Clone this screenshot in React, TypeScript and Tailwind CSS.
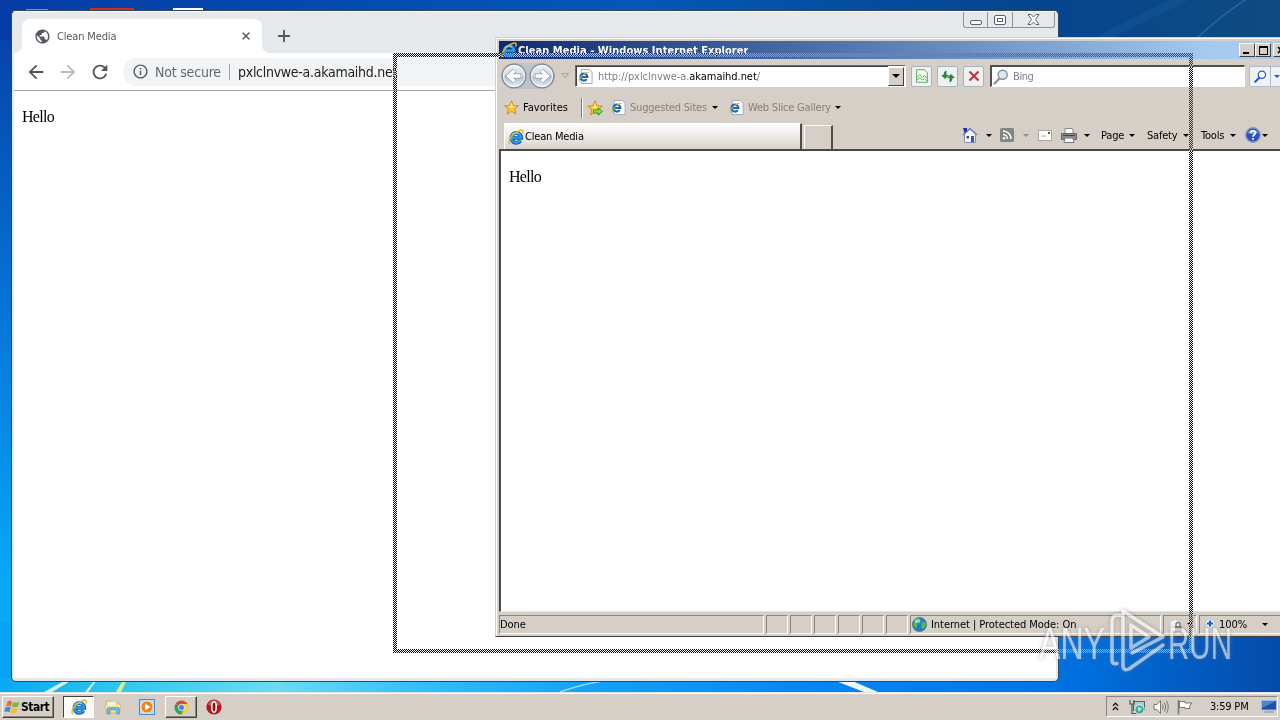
import type { ReactNode } from 'react'
import { Plus, X } from 'lucide-react'
import { MdArrowBack, MdArrowForward, MdInfoOutline, MdPublic, MdRefresh } from 'react-icons/md'

type IconProps = { className?: string }

const STATUS_CELLS = ['c1', 'c2', 'c3', 'c4', 'c5', 'c6']

function IeLogo({ className }: IconProps) {
  return (
    <svg viewBox="0 0 16 16" className={className} fill="none">
      <path d="M3.600 8.800H13.200A4.900 4.900 0 1 0 12.400 11.600" stroke="#1258a8" strokeWidth="3.800" />
      <path d="M3.600 8.600H13A4.900 4.900 0 1 0 12.300 11.300" stroke="#2f9de6" strokeWidth="2.200" />
      <path d="M4 6.200A4.900 4.900 0 0 1 11 5" stroke="#8fd8fa" strokeWidth="1.200" />
      <path d="M2.600 14.600C.2 15 .4 11.800 3 8.200 6 4 12.600-.2 14.700 1.400 15.500 2.100 15.200 3.400 14.500 4.700" stroke="#e8b52c" strokeWidth="1.400" />
    </svg>
  )
}

function IePage({ className }: IconProps) {
  return (
    <svg viewBox="0 0 16 16" className={className} fill="none">
      <path d="M3.500.5H12L15 3.500V15.500H3.500Z" fill="#fff" stroke="#9aa5b8" />
      <path d="M3 8.500H10A3.700 3.700 0 1 0 9.300 10.800" stroke="#1467bd" strokeWidth="2.300" />
      <path d="M1.500 13.500C-.5 11 8 3 11.500 3.500" stroke="#e0b030" strokeWidth="1.200" />
    </svg>
  )
}

function Star({ className, arrow }: IconProps & { arrow?: boolean }) {
  return (
    <svg viewBox="0 0 16 16" className={className}>
      <path d="M8 .8 10 5.800 15.300 6.200 11.300 9.700 12.600 15 8 12.100 3.400 15 4.700 9.700.7 6.200 6 5.800Z" fill="#fcc630" stroke="#c9821a" strokeWidth=".9" />
      <path d="M8 2.500 9.200 6.500 12.500 7 8 8 4 7 7 6.500Z" fill="#ffec9c" />
      {arrow && <path d="M6.500 10H11V8L15.500 11.500 11 15V13H6.500Z" fill="#7fe04c" stroke="#2b9422" strokeWidth=".9" />}
    </svg>
  )
}

function Caret({ className = 'fill-black' }: IconProps) {
  return (
    <svg viewBox="0 0 6 3" className={`h-[3px] w-[6px] shrink-0 ${className}`}>
      <path d="M0 0H6L3 3Z" />
    </svg>
  )
}

function ToolButton({ children }: { children: ReactNode }) {
  return (
    <div className="flex h-[21px] w-[21px] items-center justify-center rounded-[2px] border border-[#a9b3b8] bg-[#eef1f1]">
      {children}
    </div>
  )
}

function RoundArrow({ flip }: { flip?: boolean }) {
  return (
    <svg viewBox="0 0 26 26" className={flip ? 'h-[26px] w-[26px] rotate-180' : 'h-[26px] w-[26px]'}>
      <defs>
        <linearGradient id={flip ? 'ballFwd' : 'ballBack'} x1="0" y1={flip ? '1' : '0'} x2="0" y2={flip ? '0' : '1'}>
          <stop offset="0" stopColor="#f4f6f9" />
          <stop offset=".48" stopColor="#cdd5de" />
          <stop offset=".52" stopColor="#b1bdcc" />
          <stop offset="1" stopColor="#eaf2f8" />
        </linearGradient>
      </defs>
      <circle cx="13" cy="13" r="11.900" fill={flip ? 'url(#ballFwd)' : 'url(#ballBack)'} stroke="#7b8694" strokeWidth="1.200" />
      <circle cx="13" cy="13" r="10.500" fill="none" stroke="#f4f7fa" strokeWidth="1" />
      <path d="M20 13H8M13.500 7.500 7.700 13 13.500 18.500" stroke="#8f9db0" strokeWidth="4.800" fill="none" />
      <path d="M19.500 13H8M13.300 7.700 7.700 13 13.300 18.300" stroke="#fff" strokeWidth="3.400" fill="none" />
    </svg>
  )
}

function Magnifier({ className, rim, glass }: IconProps & { rim: string; glass: string }) {
  return (
    <svg viewBox="0 0 16 16" className={className}>
      <path d="M6.500 9.500 1.500 14.500" stroke={rim} strokeWidth="2.400" strokeLinecap="round" />
      <circle cx="9.700" cy="5.800" r="4.500" fill={glass} stroke={rim} strokeWidth="1.500" />
    </svg>
  )
}

function ChromeWindow() {
  return (
    <div className="absolute top-[10px] left-[11px] flex h-[672px] w-[1048px] flex-col overflow-hidden rounded-[5px] border border-[#33475c] bg-[#e5e9ec]">
      {/* Tab strip */}
      <div className="flex h-[42px] shrink-0 items-start justify-between border-t border-[#fafbfb]">
        <div className="flex h-full items-end">
          <div className="ml-[2px] h-2 w-2 bg-white">
            <div className="h-2 w-2 rounded-br-lg bg-[#e5e9ec]" />
          </div>
          <div className="flex h-[34px] w-[240px] items-center rounded-t-lg bg-white pr-[10px] pl-[12px]">
            <MdPublic className="h-[17px] w-[17px] text-[#55595e]" />
            <span className="ml-[6px] flex-1 text-[11px] tracking-[-0.15px] text-[#55595e]">Clean Media</span>
            <X className="h-3 w-3 text-[#5a5e62]" strokeWidth={3} />
          </div>
          <div className="h-2 w-2 bg-white">
            <div className="h-2 w-2 rounded-bl-lg bg-[#e5e9ec]" />
          </div>
          <Plus className="mb-[8px] ml-[5px] h-[18px] w-[18px] text-[#55595d]" strokeWidth={2.5} />
        </div>
        <div className="mr-[3px] flex h-[16px] rounded-b-[3px] border border-t-0 border-[#8d959c]">
          <div className="flex w-[24px] items-center justify-center border-r border-[#8d959c] pt-[6px]">
            <div className="h-[5px] w-[12px] rounded-[2px] border border-[#5a6070] bg-white" />
          </div>
          <div className="flex w-[25px] items-center justify-center border-r border-[#8d959c]">
            <div className="flex h-[10px] w-[12px] items-center justify-center rounded-[2px] border border-[#5a6070] bg-white">
              <div className="h-[4px] w-[6px] border border-[#5a6070]" />
            </div>
          </div>
          <div className="flex w-[41px] items-center justify-center">
            <svg viewBox="0 0 13 11" className="h-[11px] w-[13px]">
              <path d="M1 .5H4L6.500 3 9 .5H12L8.500 5.500 12 10.500H9L6.500 8 4 10.500H1L4.500 5.500Z" fill="#fff" stroke="#5a6070" />
            </svg>
          </div>
        </div>
      </div>

      {/* Address bar */}
      <div className="mx-[2px] flex h-[38px] shrink-0 items-center border-b border-[#a5a8a5] bg-white">
        <MdArrowBack className="ml-[11px] h-[22px] w-[22px] text-[#505458]" />
        <MdArrowForward className="ml-[10px] h-[22px] w-[22px] text-[#babcbe]" />
        <MdRefresh className="ml-[10px] h-[22px] w-[22px] text-[#505458]" />
        <div className="ml-[12px] flex h-[28px] flex-1 items-center rounded-l-full bg-[#f1f3f5] pl-[9px]">
          <MdInfoOutline className="h-[17px] w-[17px] text-[#55595e]" />
          <span className="ml-[6px] w-[74px] text-[14px] tracking-[-0.2px] whitespace-nowrap text-[#65696d]">Not secure</span>
          <div className="h-4 w-px bg-[#a0a4a8]" />
          <span className="ml-2 text-[14px] tracking-[-0.28px] whitespace-nowrap text-[#222]">pxlclnvwe-a.akamaihd.net</span>
        </div>
      </div>

      <div className="mx-[2px] mb-[3px] flex-1 bg-white pt-[17px] pl-[8px] font-['Liberation_Serif',serif] text-[16px] leading-[18px] tracking-[-0.7px] text-black">
        Hello
      </div>
    </div>
  )
}

function CommandBar() {
  return (
    <div className="flex h-full items-center text-[11px] tracking-[-0.2px]">
      <svg viewBox="0 0 16 16" className="h-4 w-4">
        <path d="M2.500 7V15.500H13.500V7L8 2Z" fill="#f4f7ff" stroke="#8390b8" />
        <path d="M1 8 8 1.500 15 8" fill="none" stroke="#7181b5" strokeWidth="1.500" />
        <path d="M1 1H5V4L2.500 6Z" fill="#2030a8" />
        <path d="M9 9H12V15H9Z" fill="#3b51a8" />
        <path d="M4.500 9H7V11.500H4.500Z" fill="#43515e" />
      </svg>
      <Caret className="ml-[8px] fill-black" />
      <svg viewBox="0 0 14 14" className="ml-[8px] h-[14px] w-[14px]">
        <rect width="14" height="14" rx="1.500" fill="#858585" />
        <path d="M3 3C7.500 3 11 6.500 11 11M3 6.500C5.500 6.500 7.500 8.500 7.500 11" fill="none" stroke="#fff" strokeWidth="1.500" />
        <circle cx="4" cy="10.200" r="1.300" fill="#fff" />
      </svg>
      <Caret className="ml-[9px] fill-[#918d86]" />
      <svg viewBox="0 0 14 11" className="ml-[9px] h-[11px] w-[14px]">
        <rect x=".5" y=".5" width="13" height="10" fill="#fff" stroke="#aaa5a5" />
        <rect x="10" y="2" width="2" height="2" fill="#d12222" />
        <path d="M3 6H8" stroke="#e48e8e" />
      </svg>
      <svg viewBox="0 0 16 15" className="ml-[9px] h-[15px] w-[16px]">
        <path d="M4 6V.5H11L12 2V6" fill="#fff" stroke="#888" />
        <path d="M.5 5.500H15.500V11.500H.5Z" fill="#8a8b8c" stroke="#666" />
        <path d="M2 7.500H14" stroke="#444" />
        <path d="M4 10H12L13 14.500H3Z" fill="#f8f8f8" stroke="#777" />
      </svg>
      <Caret className="ml-[7px] fill-black" />
      <span className="ml-[11px] w-[25px]">Page</span>
      <Caret className="ml-[3px] fill-black" />
      <span className="ml-[12px] w-[32px]">Safety</span>
      <Caret className="ml-[4px] fill-black" />
      <span className="ml-[12px] w-[26px]">Tools</span>
      <Caret className="ml-[3px] fill-black" />
      <svg viewBox="0 0 16 16" className="ml-[9px] h-4 w-4">
        <circle cx="8" cy="8" r="7.200" fill="#2951c4" stroke="#8795bd" strokeWidth="1.400" />
        <path d="M2.500 6A6 5 0 0 1 13.500 6Q8 8 2.500 6Z" fill="#7e9be6" />
        <path d="M5.700 6C5.700 3 10.400 3.200 10.400 5.800 10.400 7.800 8 7.600 8 9.800M8 11V12.800" fill="none" stroke="#fff" strokeWidth="1.800" />
      </svg>
      <Caret className="ml-[1px] fill-black" />
      <span className="mb-[12px] ml-[11px]">»</span>
    </div>
  )
}

function IeWindow() {
  return (
    <div className="absolute top-[37px] left-[495px] flex h-[600px] w-[802px] flex-col border border-t-[#d4d0c8] border-r-[#404040] border-b-[#404040] border-l-[#d4d0c8] bg-[#d6cfc7] text-black">
      <div className="flex min-h-0 flex-1 flex-col border-t border-l border-white pt-[2px] pr-[3px] pb-[2px] pl-[2px]">
        {/* Title bar */}
        <div className="flex h-[18px] shrink-0 items-center justify-between bg-linear-to-r from-[#0f2a70] to-[#a6caf0] to-90% pr-[4px]">
          <div className="flex h-full items-center overflow-hidden">
            <IeLogo className="ml-[2px] h-4 w-4" />
            <span className="ml-[1px] text-[11px] font-bold tracking-[0.04px] whitespace-nowrap text-white">
              Clean Media - Windows Internet Explorer
            </span>
          </div>
          <div className="flex">
            <div className="flex h-[14px] w-[16px] items-end border border-t-white border-r-[#404040] border-b-[#404040] border-l-white bg-[#d6cfc7] pb-[2px] pl-[3px]">
              <div className="h-[2px] w-[6px] bg-black" />
            </div>
            <div className="flex h-[14px] w-[16px] items-center justify-center border border-t-white border-r-[#404040] border-b-[#404040] border-l-white bg-[#d6cfc7]">
              <div className="h-[9px] w-[9px] border border-t-2 border-black" />
            </div>
            <div className="ml-[2px] flex h-[14px] w-[16px] items-center justify-center border border-t-white border-r-[#404040] border-b-[#404040] border-l-white bg-[#d6cfc7]">
              <X className="h-[10px] w-[10px]" strokeWidth={4} />
            </div>
          </div>
        </div>

        {/* Navigation */}
        <div className="flex h-[34px] shrink-0 items-center">
          <div className="ml-[2px] flex gap-[2px] rounded-full bg-[#bfc3c8]">
            <RoundArrow />
            <RoundArrow flip />
          </div>
          <svg viewBox="0 0 8 6" className="ml-[6px] h-[6px] w-2">
            <path d="M.5.5H7.500L4 5Z" fill="#d6cfc7" stroke="#a9a49c" />
          </svg>
          <div className="ml-[6px] flex h-[22px] w-[331px] items-center border border-t-[#6d6a66] border-r-white border-b-white border-l-[#6d6a66] bg-white">
            <div className="flex h-full flex-1 items-center border-t border-l border-[#404040]">
              <IePage className="ml-[1px] h-[15px] w-[15px]" />
              <span className="ml-[5px] text-[11px] tracking-[-0.06px] whitespace-nowrap text-[#808080]">
                http://pxlclnvwe-a.<span className="text-black">akamaihd.net</span>/
              </span>
            </div>
            <div className="mr-px flex h-[19px] w-[16px] items-center justify-center border border-t-white border-r-[#404040] border-b-[#404040] border-l-white bg-[#d6cfc7]">
              <svg viewBox="0 0 8 4" className="h-1 w-2">
                <path d="M0 0H8L4 4Z" />
              </svg>
            </div>
          </div>
          <div className="ml-[5px] flex gap-[5px]">
            <ToolButton>
              <svg viewBox="0 0 13 15" className="h-[14px] w-[12px]">
                <path d="M.7.7H9L12.300 4V14.300H.7Z" fill="#f3fbef" stroke="#55a458" />
                <path d="M1 9 4 6 7 9 9 7 12 10M1 12 4 9 7 12 9 10 12 13" fill="none" stroke="#5aa85d" />
              </svg>
            </ToolButton>
            <ToolButton>
              <svg viewBox="0 0 14 13" className="h-[13px] w-[14px]" fill="#278b32">
                <path d="M5.500.5V5H8L4 9 0 5H2.500C2.500 3 3 1.500 5.500.5Z" />
                <path d="M8.500 12.500V8H6L10 4 14 8H11.500C11.500 10 11 11.500 8.500 12.500Z" />
              </svg>
            </ToolButton>
            <ToolButton>
              <svg viewBox="0 0 12 12" className="h-3 w-3">
                <path d="M1.500 1.500 10.500 10.500M10.500 1.500 1.500 10.500" stroke="#c9323a" strokeWidth="2.200" />
              </svg>
            </ToolButton>
          </div>
          <div className="ml-[6px] flex h-[22px] w-[255px] items-center border-t-2 border-r border-b border-l-2 border-t-[#504d4a] border-r-white border-b-white border-l-[#504d4a] bg-white">
            <Magnifier className="ml-[1px] h-4 w-4" rim="#8d9297" glass="#d9ecf6" />
            <span className="ml-[4px] text-[11px] tracking-[-0.4px] text-[#808080]">Bing</span>
          </div>
          <div className="ml-[4px] flex h-[21px] w-[38px] rounded-[2px] border border-[#b3bcc8] bg-[#eff1f4]">
            <div className="flex w-[21px] items-center justify-center border-r border-[#b3bcc8]">
              <Magnifier className="h-[13px] w-[13px]" rim="#2355d6" glass="#fff" />
            </div>
            <div className="flex items-center pl-[3px]">
              <Caret className="fill-[#2355d6]" />
            </div>
          </div>
        </div>

        {/* Favorites */}
        <div className="flex h-[29px] shrink-0 items-center text-[11px] tracking-[-0.2px]">
          <Star className="ml-[5px] h-[15px] w-[15px]" />
          <span className="ml-[4px] w-[46px] tracking-[0.05px]">Favorites</span>
          <div className="ml-[12px] h-[20px] w-[2px] border-l border-[#7b7772] bg-white" />
          <Star className="ml-[4px] h-4 w-4" arrow />
          <IePage className="ml-[8px] h-[15px] w-[15px]" />
          <span className="ml-[4px] w-[78px] whitespace-nowrap text-[#85817c]">Suggested Sites</span>
          <Caret className="ml-[4px] fill-black" />
          <IePage className="ml-[11px] h-[15px] w-[15px]" />
          <span className="ml-[4px] w-[82px] whitespace-nowrap text-[#85817c]">Web Slice Gallery</span>
          <Caret className="ml-[5px] fill-black" />
        </div>

        {/* Tabs and command bar */}
        <div className="flex h-[27px] shrink-0 items-end">
          <div className="ml-[5px] flex h-[26px] w-[298px] items-center border-t border-r-2 border-l border-t-white border-r-[#504c48] border-l-white bg-linear-to-b from-white to-[#d8d3cb] pl-[3px]">
            <IeLogo className="h-4 w-4" />
            <span className="ml-[1px] text-[11px] tracking-[-0.2px]">Clean Media</span>
          </div>
          <div className="ml-[2px] h-[24px] w-[29px] border-t border-r-2 border-l border-t-white border-r-[#504c48] border-l-white" />
          <div className="ml-[129px] h-[28px]">
            <CommandBar />
          </div>
        </div>

        <div className="min-h-0 flex-1 border-t-2 border-b border-l-2 border-t-[#4a4744] border-b-[#e6e2dc] border-l-[#4a4744] bg-white pt-[17px] pl-[8px] font-['Liberation_Serif',serif] text-[16px] leading-[18px] tracking-[-0.7px]">
          Hello
        </div>

        {/* Status bar */}
        <div className="mt-[3px] flex h-[19px] shrink-0 gap-[2px] text-[11px] tracking-[-0.05px] whitespace-nowrap">
          <div className="flex w-[265px] items-center border border-t-[#8b8680] border-r-white border-b-white border-l-[#8b8680]">Done</div>
          {STATUS_CELLS.map((key) => (
            <div key={key} className="w-[22px] border border-t-[#8b8680] border-r-white border-b-white border-l-[#8b8680]" />
          ))}
          <div className="flex w-[251px] items-center border border-t-[#8b8680] border-r-white border-b-white border-l-[#8b8680] pl-px">
            <svg viewBox="0 0 16 16" className="h-[15px] w-[15px]">
              <circle cx="8" cy="8" r="7.500" fill="#277bc6" stroke="#3b627f" strokeWidth=".7" />
              <path d="M3 3C5 1 8 1 9 2L8 5 5 7 6 9 4 12 1.500 9ZM10 6 14 5 15 9 12 13 10 11Z" fill="#4fc04a" />
              <ellipse cx="6" cy="4.500" rx="3" ry="2" fill="#c4f0f4" opacity=".6" />
            </svg>
            <span className="ml-[4px]">Internet | Protected Mode: On</span>
          </div>
          <div className="flex w-[34px] items-center border border-t-[#8b8680] border-r-white border-b-white border-l-[#8b8680] pl-[5px]">
            <svg viewBox="0 0 14 14" className="h-[14px] w-[14px]">
              <path d="M1 12V4L6 1 11 4V12Z" fill="#f2f2f2" stroke="#c7c7c7" />
              <path d="M7 9V6.500A2 2 0 0 1 11 6.500V9" fill="none" stroke="#777" strokeWidth="1.300" />
              <rect x="6" y="8" width="6.500" height="5.500" fill="#747474" />
            </svg>
            <Caret className="ml-[4px] fill-black" />
          </div>
          <div className="flex flex-1 items-center border border-t-[#8b8680] border-r-white border-b-white border-l-[#8b8680] pl-[3px]">
            <svg viewBox="0 0 14 14" className="h-[14px] w-[14px]">
              <circle cx="7" cy="5.500" r="4.800" fill="#e1edf8" stroke="#b9c7d4" />
              <path d="M7 2.500V8.500M4 5.500H10" stroke="#1a5dc7" strokeWidth="2" />
            </svg>
            <span className="ml-[2px] w-[29px]">100%</span>
            <Caret className="ml-[14px] fill-black" />
          </div>
        </div>
      </div>
    </div>
  )
}

// Outline of the window being dragged: a one pixel checkerboard that inverts what is under it
function DragOutline() {
  const side =
    'bg-[repeating-conic-gradient(#fff_0_25%,#000_0_50%)] bg-[length:2px_2px]'
  return (
    <div className="absolute top-[53px] left-[393px] flex h-[600px] w-[800px] flex-col mix-blend-difference">
      <div className={`h-1 ${side}`} />
      <div className="flex flex-1 justify-between">
        <div className={`w-1 ${side}`} />
        <div className={`w-1 ${side}`} />
      </div>
      <div className={`h-1 ${side}`} />
    </div>
  )
}

function Watermark() {
  return (
    <svg viewBox="0 0 200 70" className="absolute top-[605px] left-[1035px] h-[70px] w-[200px] opacity-60 drop-shadow-[0_0_2px_#777]" fill="none">
      <g fill="#fff" fontFamily="'Liberation Sans', Arial, sans-serif" fontSize="45">
        <text x="4" y="54" textLength="66" lengthAdjust="spacingAndGlyphs">ANY</text>
        <text x="133" y="54" textLength="64" lengthAdjust="spacingAndGlyphs">RUN</text>
      </g>
      <g stroke="#fff" strokeWidth="3.500" strokeLinejoin="round" strokeLinecap="round">
        <path d="M85 10.500Q77 9 77 17V55Q77 60 82 58.500" />
        <path d="M88 50V6L128 32 97 48" />
        <path d="M96 20V43L114 32Z" />
        <path d="M88 50V62Q89 66 94 64L128 40" />
      </g>
    </svg>
  )
}

function Taskbar() {
  return (
    <div className="flex h-[28px] shrink-0 items-center justify-between border-t border-[#e5e2dd] bg-[#d6cfc7] text-black shadow-[inset_0_1px_0_#fff]">
      <div className="flex h-full items-center pt-px">
        <div className="ml-[2px] flex h-[22px] w-[52px] items-center border border-t-white border-r-[#404040] border-b-[#404040] border-l-white pl-px shadow-[inset_-1px_-1px_0_#8b8680]">
          <svg viewBox="0 0 16 16" className="h-4 w-4">
            <path d="M3.500 2.500Q6 1 8.200 2.700L7 7.500Q4.500 6 2 7.300Z" fill="#ef6a35" />
            <path d="M9.200 3Q12 4.200 15.500 2.700L14 7.500Q11 9 8 7.700Z" fill="#78b943" />
            <path d="M1.700 8.300Q4.500 7 6.700 8.500L5.500 13.300Q3 12 .3 13Z" fill="#3f8ad8" />
            <path d="M7.700 8.900Q10.500 10.200 13.700 8.800L12.300 13.500Q9.500 15 6.300 13.700Z" fill="#f7bd2d" />
          </svg>
          <span className="ml-[1px] text-[12px] font-bold tracking-[-0.5px]">Start</span>
        </div>
        <div className="ml-[9px] flex h-[22px] w-[31px] items-center justify-center border border-t-[#404040] border-r-white border-b-white border-l-[#404040] bg-[#fbfaf9]">
          <IeLogo className="h-4 w-4" />
        </div>
        <svg viewBox="0 0 16 16" className="ml-[11px] h-4 w-4">
          <path d="M1 2H6L7 4H15V14H1Z" fill="#f5dc85" stroke="#cfae4b" strokeWidth=".7" />
          <path d="M3 3H11V7H3Z" fill="#e9f6e4" />
          <path d="M1 6H15V10H1Z" fill="#f9e79e" />
          <path d="M2 15V10Q2 8.500 4 8.500H13Q14.500 8.500 14.500 10V15H11.500V11H5V15Z" fill="#69b8e8" stroke="#378bc2" strokeWidth=".5" />
        </svg>
        <svg viewBox="0 0 16 16" className="ml-[18px] h-4 w-4">
          <rect x=".5" y=".5" width="15" height="15" fill="#b9dcf2" stroke="#4b8cc5" />
          <circle cx="8" cy="8" r="6" fill="#f08218" stroke="#fff" strokeWidth=".6" />
          <path d="M6 4.500 11.500 8 6 11.500Z" fill="#fff" />
        </svg>
        <div className="ml-[10px] flex h-[22px] w-[32px] items-center justify-center border border-t-white border-r-[#404040] border-b-[#404040] border-l-white shadow-[inset_-1px_-1px_0_#8b8680]">
          <svg viewBox="0 0 16 16" className="h-[15px] w-[15px]">
            <path d="M8 8 1.500 4.200A7.500 7.500 0 0 1 14.500 4.200Z" fill="#dd4a3c" />
            <path d="M8 8 1.500 4.200A7.500 7.500 0 0 0 8 15.500L11 10Z" fill="#2da45a" />
            <path d="M8 4.200H14.500A7.500 7.500 0 0 1 8 15.500L11.500 9Z" fill="#f9cd3a" />
            <circle cx="8" cy="8" r="3.300" fill="#4285e8" stroke="#fff" strokeWidth=".9" />
          </svg>
        </div>
        <svg viewBox="0 0 16 16" className="ml-[9px] h-4 w-4">
          <circle cx="8" cy="8" r="7.600" fill="#b3181c" />
          <path d="M2 6A6.200 6.200 0 0 1 14 6Q8 8 2 6Z" fill="#d8504c" />
          <ellipse cx="8" cy="8" rx="2.200" ry="5.200" fill="#8d1014" stroke="#fff" strokeWidth="1.500" />
        </svg>
      </div>

      <div className="mr-[2px] flex h-[21px] w-[172px] items-center border border-t-[#8b8680] border-r-white border-b-white border-l-[#8b8680] pl-[5px]">
        <svg viewBox="0 0 8 10" className="h-[9px] w-[7px]" fill="none" stroke="#111" strokeWidth="1.500">
          <path d="M1 4.300 4 1.300 7 4.300M1 9 4 6 7 9" />
        </svg>
        <svg viewBox="0 0 16 16" className="ml-[10px] h-4 w-4">
          <rect x="4.500" y="2.500" width="11" height="9" fill="#a9cdd0" stroke="#466c70" />
          <path d="M1 1V5H5V1M3 5V14.500H8" fill="none" stroke="#555" strokeWidth="1.200" />
          <circle cx="10.500" cy="10.500" r="4.700" fill="#3ba69a" stroke="#eef8f5" />
          <path d="M8 9 11 8 13 10 10 13Z" fill="#a9e0ce" />
        </svg>
        <svg viewBox="0 0 17 16" className="ml-[8px] h-4 w-[17px]" fill="none" stroke="#777">
          <path d="M1 5.500H4L7.500 1.500V14.500L4 10.500H1Z" fill="#fff" />
          <path d="M9.500 5.500Q11 8 9.500 10.500M11.500 3.500Q14 8 11.500 12.500M13.500 1.800Q17 8 13.500 14.200" />
        </svg>
        <svg viewBox="0 0 16 16" className="ml-[7px] h-4 w-4">
          <path d="M1.500 1V15.500" stroke="#777" strokeWidth="1.600" />
          <path d="M2.500 2.500H8V4H15L12.500 7 13 9.500H8V8.500H2.500Z" fill="#fff" stroke="#777" />
        </svg>
        <span className="ml-[17px] w-[40px] text-[11px] tracking-[-0.2px] whitespace-nowrap">3:59 PM</span>
        <svg viewBox="0 0 16 13" className="ml-[11px] h-[13px] w-4">
          <rect x=".5" y=".5" width="15" height="9.500" fill="#1f4fa9" stroke="#9fb9de" />
          <path d="M1 1H15L1 8Z" fill="#4c83d0" />
          <path d="M3 12H13" stroke="#8a8f98" />
        </svg>
      </div>
    </div>
  )
}

export default function App() {
  return (
    <div className="relative isolate flex h-[720px] w-[1280px] flex-col overflow-hidden font-['DejaVu_Sans_Condensed','DejaVu_Sans',sans-serif] leading-none select-none">
      <div className="flex flex-1 flex-col justify-between bg-linear-to-b from-[#083da3] via-[#087bdc] via-50% to-[#08aaf8] to-85%">
        {/* Wallpaper above, right of and below the windows */}
        <div className="flex h-[40px] items-start bg-[linear-gradient(90deg,#053ca5,#0458b6_50%,#04458f_80%,#104a80)]">
          <div className="mt-[9px] ml-[26px] h-px w-[22px] bg-[#7d94b5]" />
          <div className="mt-2 ml-[42px] h-[2px] w-[44px] bg-[#d32d20]" />
          <div className="mt-2 ml-[39px] h-[2px] w-[30px] bg-white" />
          <svg viewBox="0 0 220 40" className="ml-[857px] h-10 w-[220px]" fill="none">
            <path d="M135 40Q160 16 188-2" stroke="#2e70ac" strokeWidth="2" opacity=".6" />
            <path d="M40 40Q80 18 125-2" stroke="#1f62ab" strokeWidth="9" opacity=".25" />
          </svg>
        </div>
        <div className="flex h-[70px] items-end bg-[linear-gradient(90deg,#08a3f5,#0080f0_70%,#0070e0_84%,#044ba9)]">
          <svg viewBox="0 0 1060 14" className="h-[14px] w-[1060px]" preserveAspectRatio="none">
            <defs>
              <linearGradient id="glow">
                <stop offset="0" stopColor="#08a8f6" />
                <stop offset=".12" stopColor="#31c8ee" />
                <stop offset=".26" stopColor="#6bdcf2" />
                <stop offset=".4" stopColor="#32bdfb" />
                <stop offset=".55" stopColor="#14a2f5" />
                <stop offset=".75" stopColor="#0887f5" />
                <stop offset="1" stopColor="#0074e6" />
              </linearGradient>
            </defs>
            <rect width="1060" height="14" fill="url(#glow)" />
            <path d="M44 14 66 2H72L52 14ZM85 14 95 2H97L88 14Z" fill="#d9f5fb" />
            <path d="M116 14 123 2H127L121 14Z" fill="#d5ef88" />
            <path d="M560 14Q585 5 610 2" fill="none" stroke="#8fdcff" strokeWidth="1.500" />
            <path d="M833 2H850L878 14H864Z" fill="#e9f7ff" />
          </svg>
        </div>
      </div>
      <Taskbar />
      <ChromeWindow />
      <IeWindow />
      <DragOutline />
      <Watermark />
    </div>
  )
}
